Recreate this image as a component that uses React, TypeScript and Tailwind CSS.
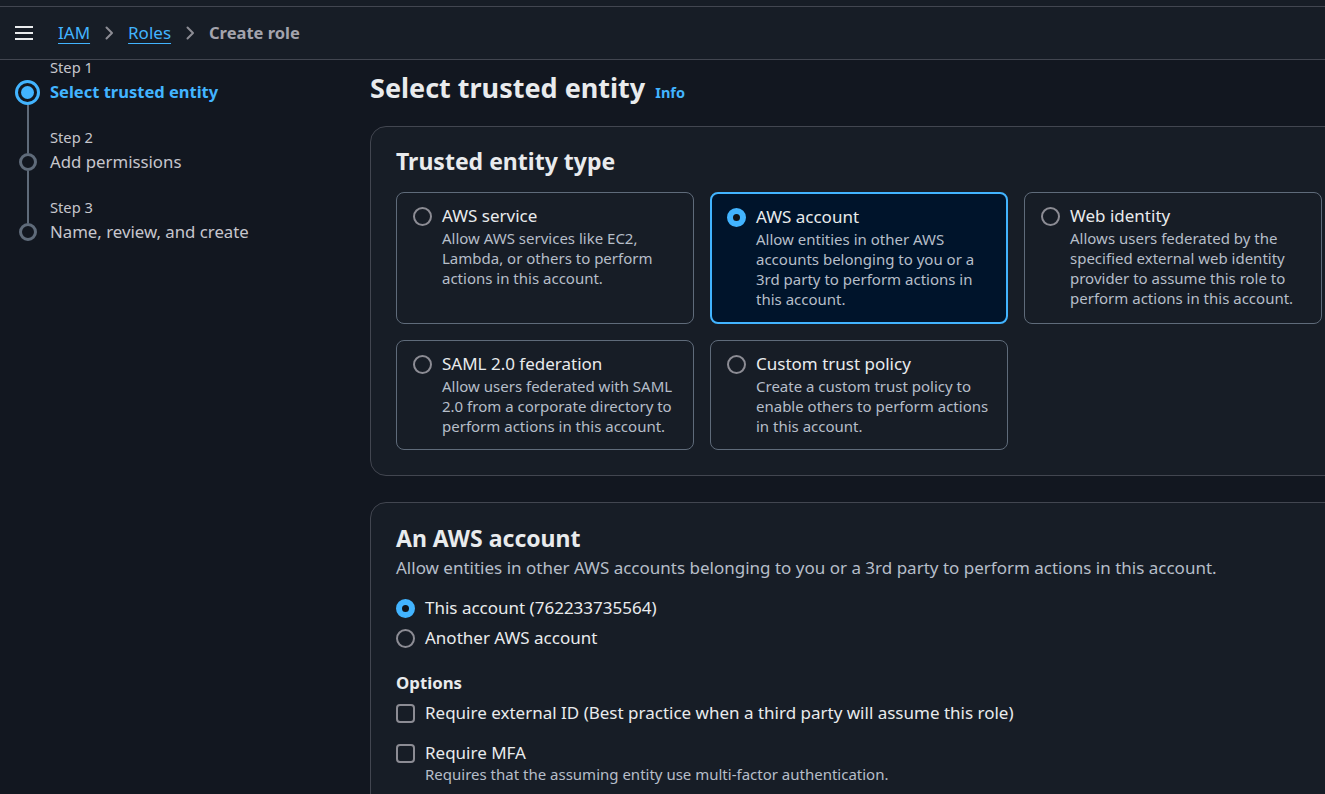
import React from "react";

const FONT = { fontFamily: "'Noto Sans', Roboto, sans-serif" };

type Tile = { title: string; desc: string; selected?: boolean };

const TILES: Tile[] = [
  {
    title: "AWS service",
    desc: "Allow AWS services like EC2, Lambda, or others to perform actions in this account.",
  },
  {
    title: "AWS account",
    desc: "Allow entities in other AWS accounts belonging to you or a 3rd party to perform actions in this account.",
    selected: true,
  },
  {
    title: "Web identity",
    desc: "Allows users federated by the specified external web identity provider to assume this role to perform actions in this account.",
  },
  {
    title: "SAML 2.0 federation",
    desc: "Allow users federated with SAML 2.0 from a corporate directory to perform actions in this account.",
  },
  {
    title: "Custom trust policy",
    desc: "Create a custom trust policy to enable others to perform actions in this account.",
  },
];

const STEPS = [
  { step: "Step 1", label: "Select trusted entity", active: true },
  { step: "Step 2", label: "Add permissions" },
  { step: "Step 3", label: "Name, review, and create" },
];

function Radio({ checked }: { checked?: boolean }) {
  return checked ? (
    <span className="block w-[19px] h-[19px] shrink-0 rounded-full border-[6px] border-[#42b4ff] bg-[#0f141a]" />
  ) : (
    <span className="block w-[19px] h-[19px] shrink-0 rounded-full border-2 border-[#8c8c94]" />
  );
}

function Chevron() {
  return (
    <svg viewBox="0 0 16 16" width="16" height="16" fill="none" stroke="#8c8c94" strokeWidth="2" strokeLinecap="round" strokeLinejoin="round">
      <path d="M5.5 2.5l5.5 5.5-5.5 5.5" />
    </svg>
  );
}

function Sidebar() {
  return (
    <nav className="w-[370px] shrink-0 pl-[15px]">
      {STEPS.map((s, i) => {
        const first = i === 0;
        const last = i === STEPS.length - 1;
        return (
          <div key={s.step} className="flex gap-[10px] h-[70px]">
            <div className="w-[25px] flex flex-col items-center">
              <div className={`w-[2px] ${s.active ? "h-[19.5px]" : "h-[23px]"} ${first ? "" : "bg-[#5f6b7a]"}`} />
              {s.active ? (
                <span className="w-[25px] h-[25px] rounded-full border-[3px] border-[#42b4ff] flex items-center justify-center">
                  <span className="w-[13px] h-[13px] rounded-full bg-[#42b4ff]" />
                </span>
              ) : (
                <span className="w-[18px] h-[18px] rounded-full border-[3px] border-[#5f6b7a]" />
              )}
              <div className={`w-[2px] flex-1 ${last ? "" : "bg-[#5f6b7a]"}`} />
            </div>
            <div>
              <div className="text-[14.7px] leading-[15px] text-[#c6c6cd]">{s.step}</div>
              <div
                className={`mt-[5px] leading-[24px] ${
                  s.active ? "text-[16.5px] font-bold text-[#42b4ff]" : "text-[16.8px] text-[#c6c6cd]"
                }`}
              >
                {s.label}
              </div>
            </div>
          </div>
        );
      })}
    </nav>
  );
}

function EntityTile({ tile }: { tile: Tile }) {
  return (
    <div
      className={`flex gap-[10px] rounded-[8px] pl-4 pr-[16px] pt-[12px] pb-[13px] ${
        tile.selected
          ? "border-2 border-[#42b4ff] bg-[#00142b] pl-[15px] pr-[15px] pt-[11px] pb-[12px]"
          : "border border-[#5f6b7a]"
      }`}
    >
      <div className="pt-[2px]">
        <Radio checked={tile.selected} />
      </div>
      <div>
        <div className="text-[17px] leading-[22px] text-[#e9ebed]">{tile.title}</div>
        <div className="mt-[1px] text-[15px] leading-[20px] text-[#b6bec9]">{tile.desc}</div>
      </div>
    </div>
  );
}

function Checkbox() {
  return <span className="block w-[19px] h-[19px] shrink-0 rounded-[4px] border-2 border-[#8c8c94]" />;
}

export default function App() {
  return (
    <div className="w-screen h-screen overflow-hidden bg-[#121720] text-[#e9ebed]" style={FONT}>
      <div className="h-[7px] bg-[#171d26] border-b border-[#424650]" />
      <header className="h-[53px] bg-[#171d26] border-b border-[#424650] flex items-center pl-[15px]">
        <svg viewBox="0 0 18 14" width="18" height="14" className="mr-[25px]">
          <path d="M0 1h18M0 7h18M0 13h18" stroke="#e9ebed" strokeWidth="2.2" />
        </svg>
        <a className="text-[17px] text-[#42b4ff] underline underline-offset-[4px] decoration-1">IAM</a>
        <span className="mx-[11px] flex"><Chevron /></span>
        <a className="text-[17px] text-[#42b4ff] underline underline-offset-[4px] decoration-1">Roles</a>
        <span className="mx-[11px] flex"><Chevron /></span>
        <span className="text-[16.5px] font-bold text-[#a4a4ad]">Create role</span>
      </header>

      <div className="flex">
        <Sidebar />
        <main className="pt-[12px]">
          <div className="flex items-baseline gap-[10px]">
            <h1 className="text-[27px] leading-[32px] font-bold text-[#e9ebed]">Select trusted entity</h1>
            <a className="text-[14.5px] font-bold text-[#42b4ff]">Info</a>
          </div>

          <section className="mt-[22px] w-[979px] rounded-[16px] border border-[#424650] bg-[#171d26] px-[25px] pt-[19px] pb-[25px]">
            <h2 className="text-[23px] leading-[30px] font-bold text-[#e9ebed]">Trusted entity type</h2>
            <div className="mt-[16px] grid grid-cols-[298px_298px_298px] gap-4">
              {TILES.map((t) => (
                <EntityTile key={t.title} tile={t} />
              ))}
            </div>
          </section>

          <section className="mt-[26px] w-[979px] h-[400px] rounded-[16px] border border-[#424650] bg-[#171d26] px-[25px] pt-[20px]">
            <h2 className="text-[23px] leading-[30px] font-bold text-[#e9ebed]">An AWS account</h2>
            <p className="mt-[4px] text-[17px] leading-[22px] text-[#b6bec9]">
              Allow entities in other AWS accounts belonging to you or a 3rd party to perform actions in this account.
            </p>
            <div className="mt-[18px] flex flex-col gap-[8px]">
              <label className="flex items-center gap-[10px] text-[17px] leading-[22px]">
                <Radio checked />
                This account (762233735564)
              </label>
              <label className="flex items-center gap-[10px] text-[17px] leading-[22px]">
                <Radio />
                Another AWS account
              </label>
            </div>
            <div className="mt-[23px] text-[16.8px] leading-[22px] font-bold">Options</div>
            <label className="mt-[8px] flex items-center gap-[10px] text-[17px] leading-[22px]">
              <Checkbox />
              Require external ID (Best practice when a third party will assume this role)
            </label>
            <label className="mt-[18px] flex items-center gap-[10px] text-[17px] leading-[22px]">
              <Checkbox />
              Require MFA
            </label>
            <p className="pl-[29px] text-[15px] leading-[20px] text-[#b6bec9]">
              Requires that the assuming entity use multi-factor authentication.
            </p>
          </section>
        </main>
      </div>
    </div>
  );
}
